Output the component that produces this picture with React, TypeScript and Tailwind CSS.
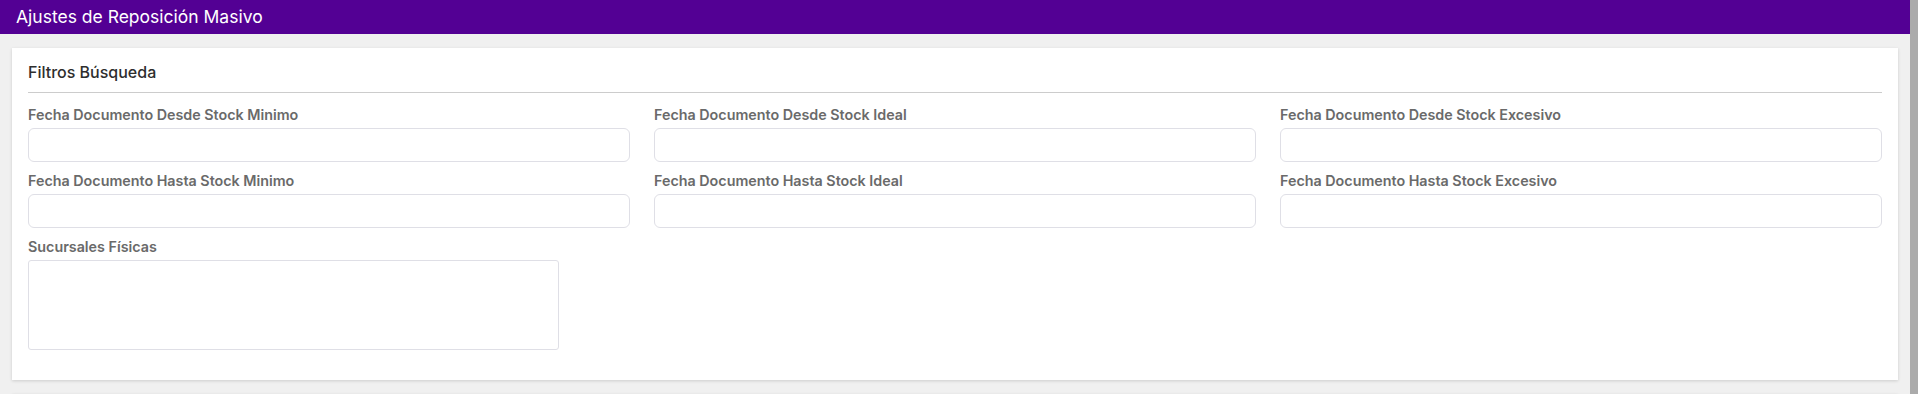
import React from 'react';

const font = { fontFamily: 'Inter, "Noto Sans", sans-serif' };

const rows: string[][] = [
  [
    'Fecha Documento Desde Stock Minimo',
    'Fecha Documento Desde Stock Ideal',
    'Fecha Documento Desde Stock Excesivo',
  ],
  [
    'Fecha Documento Hasta Stock Minimo',
    'Fecha Documento Hasta Stock Ideal',
    'Fecha Documento Hasta Stock Excesivo',
  ],
];

function Field({ label }: { label: string }) {
  return (
    <div className="flex flex-col mb-[9px]">
      <label className="text-[14.3px] leading-[20px] font-semibold text-[#6a6a6a] mb-[3px]">{label}</label>
      <input
        type="text"
        className="h-[34px] w-full rounded-[6px] border border-[#dfdfe6] bg-white px-3 text-[13px] outline-none"
      />
    </div>
  );
}

export default function App() {
  return (
    <div className="flex h-[394px] w-full bg-[#f0f0f0] overflow-hidden" style={font}>
      <div className="flex-1 min-w-0 flex flex-col">
        <div className="h-[34px] bg-[#530094] flex items-center px-4 shrink-0">
          <span className="text-white text-[17.5px] leading-none">Ajustes de Reposición Masivo</span>
        </div>

        <div className="mx-3 mt-[14px] bg-white shadow-[0_1px_3px_rgba(0,0,0,0.15)] px-4 pt-[12px] pb-[30px]">
          <div className="text-[16px] leading-[24px] font-medium text-[#2e2e2e] pb-[8px] border-b border-[#cccccc]">
            Filtros Búsqueda
          </div>

          <div className="mt-[12px] grid grid-cols-3 gap-x-6">
            {rows.flat().map((label) => (
              <Field key={label} label={label} />
            ))}
          </div>

          <div className="flex flex-col">
            <label className="text-[14.3px] leading-[20px] font-semibold text-[#6a6a6a] mb-[3px]">Sucursales Físicas</label>
            <textarea className="h-[90px] w-[531px] rounded-[3px] border border-[#dfdfe6] bg-white resize-none outline-none" />
          </div>
        </div>

        <div className="mx-3 mt-[14px] h-[20px] bg-white shadow-[0_1px_3px_rgba(0,0,0,0.15)] shrink-0" />
      </div>
      <div className="w-[8px] bg-[#ababab] shrink-0" />
    </div>
  );
}
